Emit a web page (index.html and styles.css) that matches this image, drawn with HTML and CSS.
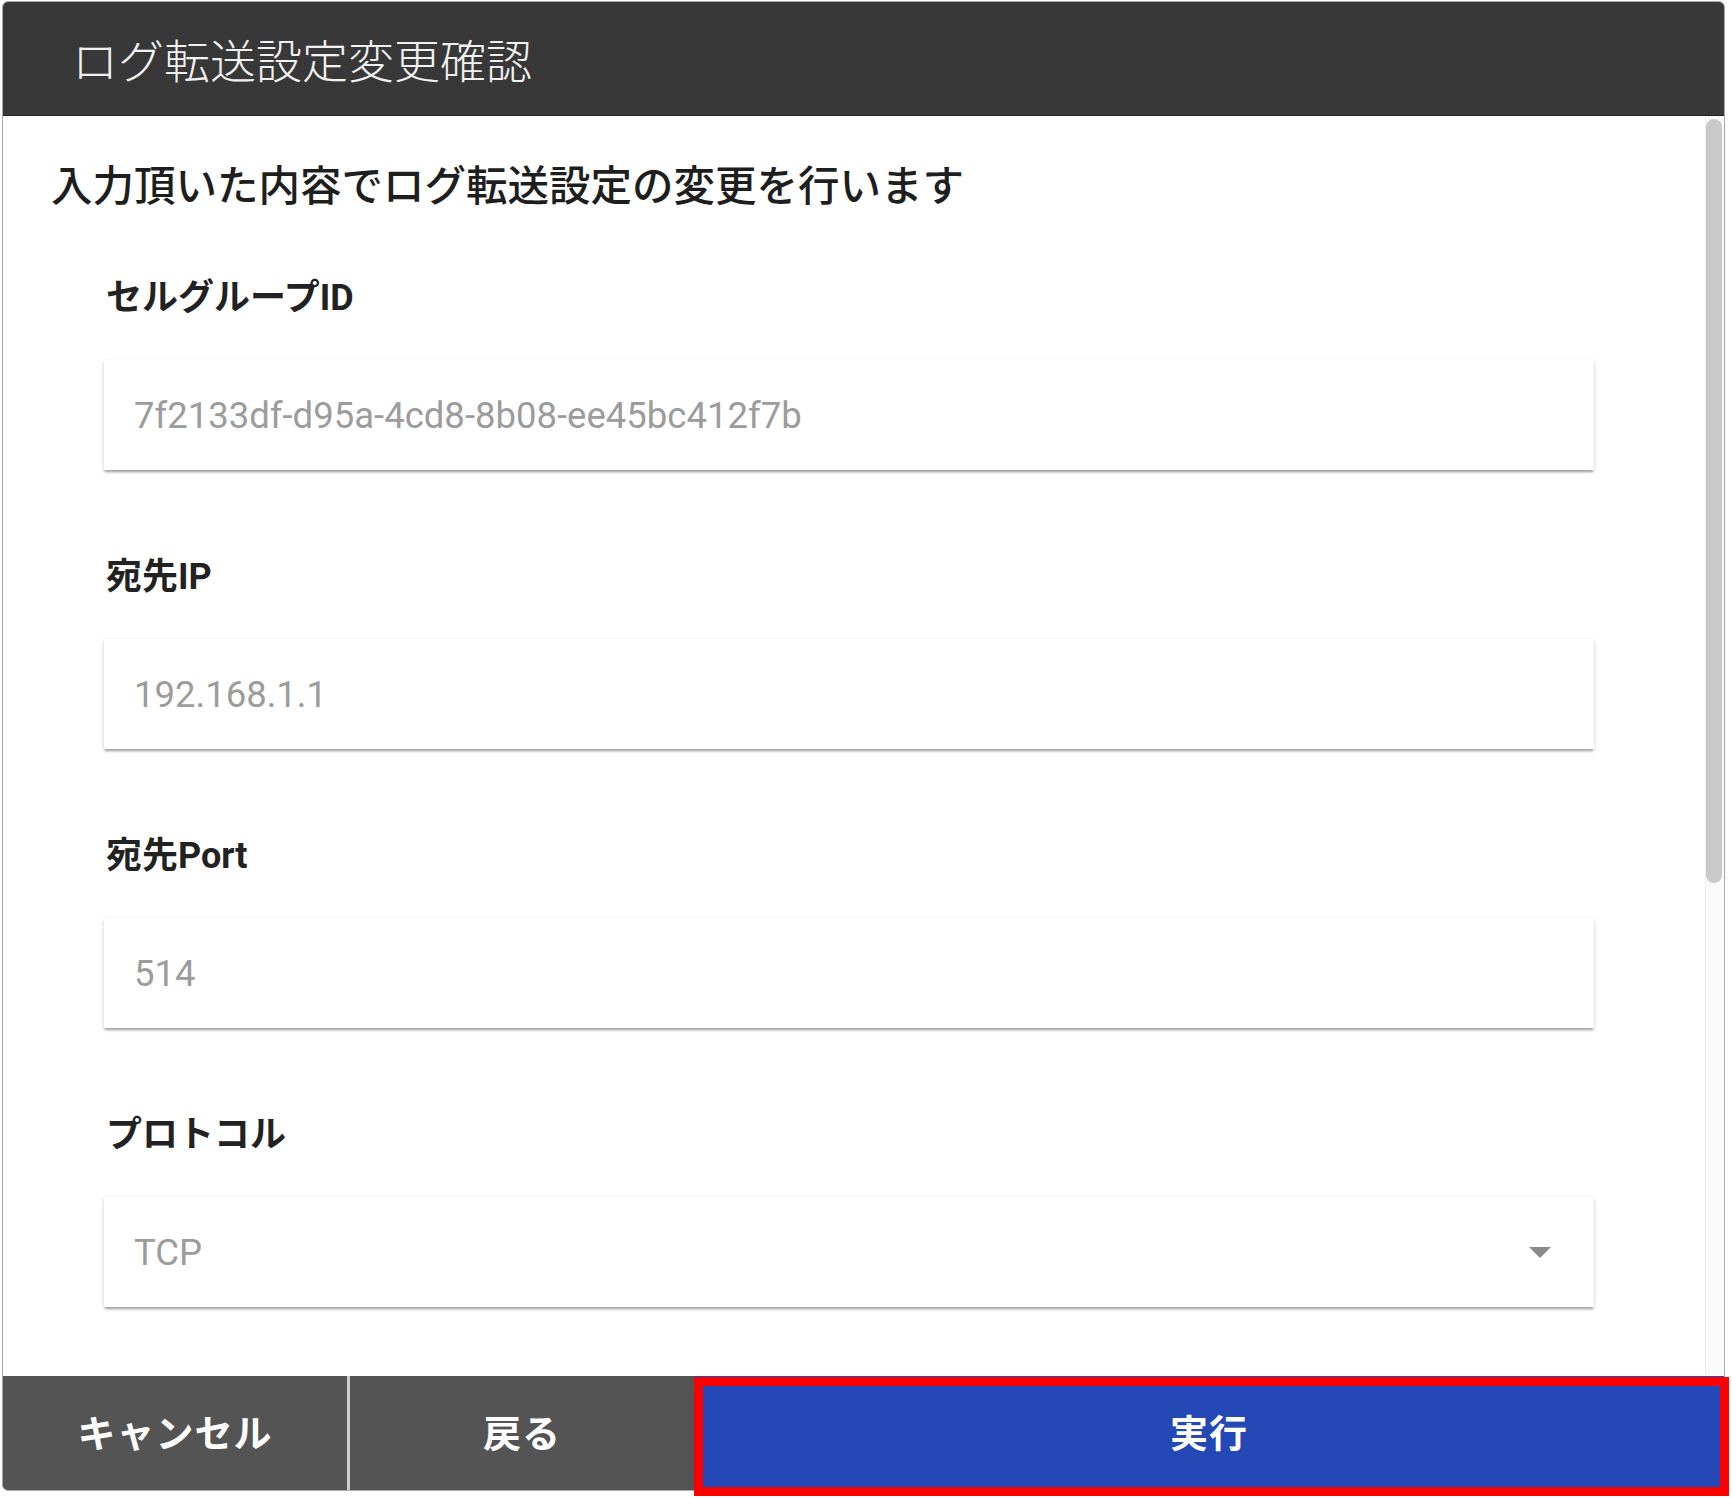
FILE: index.html
```html
<!DOCTYPE html>
<html lang="ja">
<head>
<meta charset="utf-8">
<title>ログ転送設定変更確認</title>
<link rel="stylesheet" href="styles.css">
</head>
<body>
<div class="dialog">
  <div class="dialog-header">ログ転送設定変更確認</div>
  <div class="dialog-body">
    <div class="content">
      <h2 class="lead">入力頂いた内容でログ転送設定の変更を行います</h2>
      <div class="field">
        <div class="field-label">セルグループID</div>
        <div class="field-box">7f2133df-d95a-4cd8-8b08-ee45bc412f7b</div>
      </div>
      <div class="field">
        <div class="field-label">宛先IP</div>
        <div class="field-box">192.168.1.1</div>
      </div>
      <div class="field">
        <div class="field-label">宛先Port</div>
        <div class="field-box">514</div>
      </div>
      <div class="field">
        <div class="field-label">プロトコル</div>
        <div class="field-box select">
          <span>TCP</span>
          <span class="caret"></span>
        </div>
      </div>
    </div>
    <div class="scrollbar"><div class="thumb"></div></div>
  </div>
  <div class="dialog-footer">
    <div class="btn btn-cancel">キャンセル</div>
    <div class="btn btn-back">戻る</div>
    <div class="btn btn-exec">実行</div>
  </div>
</div>
</body>
</html>
```
FILE: styles.css
```css
html, body {
  margin: 0;
  padding: 0;
  background: #ffffff;
}
body {
  width: 1732px;
  height: 1498px;
  overflow: hidden;
  font-family: "Roboto", "Noto Sans CJK JP", sans-serif;
}
.dialog {
  margin: 1px 0 0 2px;
  width: 1721px;
  border: 1px solid #a8a8a8;
  border-radius: 6px;
  background: #ffffff;
  display: flex;
  flex-direction: column;
}
.dialog-header {
  height: 114px;
  background: #383838;
  color: #f2f2f2;
  font-family: "Noto Sans CJK JP", sans-serif;
  font-weight: 300;
  font-size: 46px;
  display: flex;
  align-items: center;
  padding-left: 69px;
  padding-bottom: 2px;
  box-sizing: border-box;
  border-radius: 5px 5px 0 0;
  border-bottom: 1px solid #222;
}
.dialog-body {
  height: 1260px;
  display: flex;
  overflow: hidden;
}
.content {
  flex: 1;
  padding-top: 43px;
  overflow: hidden;
}
.lead {
  margin: 0 0 0 48px;
  font-size: 41.5px;
  line-height: 49px;
  font-weight: 500;
  color: #1e1e1e;
  font-family: "Noto Sans CJK JP", sans-serif;
}
.field {
  margin-left: 101px;
  width: 1490px;
  margin-top: 85px;
}
.lead + .field {
  margin-top: 68px;
}
.field-label {
  font-size: 36px;
  line-height: 44px;
  font-weight: 700;
  color: #222222;
  margin-left: 2px;
  margin-bottom: 40px;
}
.field-box {
  height: 110px;
  box-sizing: border-box;
  padding-left: 30px;
  padding-right: 43px;
  display: flex;
  align-items: center;
  font-family: "Roboto", sans-serif;
  font-size: 36.5px;
  color: #9c9c9c;
  background: #ffffff;
  box-shadow: 0 3px 2px -1px rgba(0, 0, 0, 0.25), 0 2px 3px 0 rgba(0, 0, 0, 0.12), 0 1px 6px 0 rgba(0, 0, 0, 0.08);
}
.select {
  justify-content: space-between;
}
.caret {
  width: 0;
  height: 0;
  border-left: 11px solid transparent;
  border-right: 11px solid transparent;
  border-top: 11px solid #8a8a8a;
}
.scrollbar {
  width: 19px;
  background: #fafafa;
  border-left: 1px solid #eeeeee;
  box-sizing: border-box;
  padding-top: 3px;
}
.thumb {
  width: 16px;
  height: 764px;
  border-radius: 8px;
  background: #c9c9c9;
}
.dialog-footer {
  height: 114px;
  display: flex;
  background: #545454;
  border-radius: 0 0 5px 5px;
}
.btn {
  display: flex;
  align-items: center;
  justify-content: center;
  color: #ffffff;
  font-family: "Noto Sans CJK JP", sans-serif;
  font-weight: 700;
  font-size: 38px;
  letter-spacing: 1px;
  padding-bottom: 6px;
  box-sizing: border-box;
}
.btn-cancel {
  width: 344px;
  background: #545454;
  border-radius: 0 0 0 5px;
}
.btn-back {
  width: 347px;
  background: #545454;
  border-left: 3px solid #cfcfcf;
}
.btn-exec {
  flex: 1;
  background: #2548b7;
  position: relative;
  border-radius: 0 0 5px 0;
}
.btn-exec::after {
  content: "";
  position: absolute;
  left: 0;
  top: 1px;
  right: -5px;
  bottom: -6px;
  border: 9px solid #ff0000;
}
```
